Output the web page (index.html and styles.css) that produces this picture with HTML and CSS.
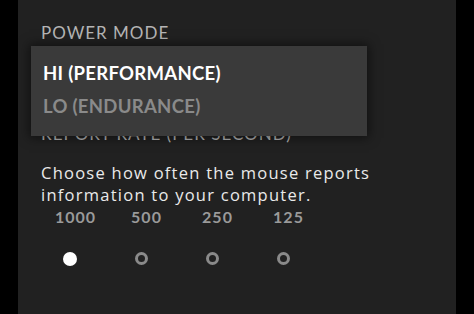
FILE: index.html
```html
<!DOCTYPE html>
<html lang="en">
<head>
    <meta charset="UTF-8">
    <meta name="viewport" content="width=device-width, initial-scale=1.0">
    <title>Power Mode</title>
    <link rel="stylesheet" href="styles.css">
</head>
<body>
    <div class="panel">
        <div class="setting">
            <h2 class="setting-title">POWER MODE</h2>
            <div class="select-wrap">
                <ul class="dropdown">
                    <li class="dropdown-item active">HI (PERFORMANCE)</li>
                    <li class="dropdown-item">LO (ENDURANCE)</li>
                </ul>
            </div>
        </div>

        <div class="setting">
            <h2 class="setting-title">REPORT RATE (PER SECOND)</h2>
            <p class="setting-desc">Choose how often the mouse reports information to your computer.</p>
            <div class="rates">
                <label class="rate">
                    <span class="rate-label">1000</span>
                    <span class="radio checked"></span>
                </label>
                <label class="rate">
                    <span class="rate-label">500</span>
                    <span class="radio"></span>
                </label>
                <label class="rate">
                    <span class="rate-label">250</span>
                    <span class="radio"></span>
                </label>
                <label class="rate">
                    <span class="rate-label">125</span>
                    <span class="radio"></span>
                </label>
            </div>
        </div>
    </div>
</body>
</html>
```

FILE: styles.css
```css
* {
    margin: 0;
    padding: 0;
    box-sizing: border-box;
}

body {
    font-family: 'Lato', 'Noto Sans', sans-serif;
    background: #000;
    height: 314px;
    overflow: hidden;
}

.panel {
    margin: 0 18px;
    height: 314px;
    background: #212121;
    padding: 22px 0 0 23px;
}

.setting-title {
    font-size: 17px;
    font-weight: 400;
    letter-spacing: 1px;
    color: #b5b5b5;
    line-height: 22px;
}

/* closed select sits under the open list */
.select-wrap {
    position: relative;
    height: 79px;
}

.dropdown {
    list-style: none;
    position: absolute;
    top: 2px;
    left: -10px;
    width: 336px;
    height: 90px;
    background: #3a3a3a;
    box-shadow: 0 0 10px 2px rgba(0, 0, 0, 0.5);
    padding-top: 11px;
    z-index: 10;
}

.dropdown-item {
    font-size: 18.5px;
    font-weight: 700;
    letter-spacing: 0.3px;
    color: #8a8a8a;
    line-height: 33px;
    padding-left: 12px;
}

.dropdown-item.active {
    color: #fff;
}

.setting-desc {
    margin-top: 17px;
    font-family: 'Open Sans', 'Lato', sans-serif;
    font-size: 16.5px;
    letter-spacing: 1.25px;
    line-height: 22px;
    color: #eaeaea;
    width: 400px;
}

.rates {
    display: flex;
    margin-top: 1px;
    margin-left: -1px;
}

.rate {
    width: 71px;
    display: flex;
    flex-direction: column;
    align-items: center;
}

.rate-label {
    font-size: 16px;
    font-weight: 700;
    letter-spacing: 1px;
    color: #9a9a9a;
    line-height: 20px;
}

.radio {
    margin-top: 25px;
    margin-right: 11px;
    width: 13px;
    height: 13px;
    border-radius: 50%;
    border: 3px solid #8a8a8a;
}

.radio.checked {
    width: 14px;
    height: 14px;
    border: none;
    background: #fff;
}
```
